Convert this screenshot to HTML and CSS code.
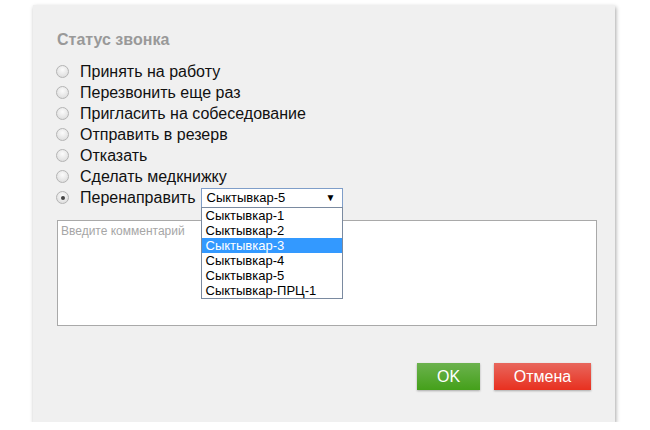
FILE: index.html
```html
<!DOCTYPE html>
<html lang="ru">
<head>
<meta charset="utf-8">
<link rel="stylesheet" href="styles.css">
</head>
<body>
<div class="panel">
  <div class="title">Статус звонка</div>
  <ul class="options">
    <li class="opt"><span class="radio"></span><span>Принять на работу</span></li>
    <li class="opt"><span class="radio"></span><span>Перезвонить еще раз</span></li>
    <li class="opt"><span class="radio"></span><span>Пригласить на собеседование</span></li>
    <li class="opt"><span class="radio"></span><span>Отправить в резерв</span></li>
    <li class="opt"><span class="radio"></span><span>Отказать</span></li>
    <li class="opt"><span class="radio"></span><span>Сделать медкнижку</span></li>
    <li class="opt"><span class="radio checked"></span><span>Перенаправить</span>
      <div class="select">
        <div class="select-box"><span>Сыктывкар-5</span><span class="arrow">▼</span></div>
        <ul class="dropdown">
          <li>Сыктывкар-1</li>
          <li>Сыктывкар-2</li>
          <li class="active">Сыктывкар-3</li>
          <li>Сыктывкар-4</li>
          <li>Сыктывкар-5</li>
          <li>Сыктывкар-ПРЦ-1</li>
        </ul>
      </div>
    </li>
  </ul>
  <div class="comment">Введите комментарий</div>
  <div class="actions">
    <button class="btn ok">OK</button>
    <button class="btn cancel">Отмена</button>
  </div>
</div>
</body>
</html>
```
FILE: styles.css
```css
html, body {
  margin: 0;
  padding: 0;
  background: #fff;
}
body {
  padding: 5px 0 0 33px;
  font-family: "Liberation Sans", Arial, sans-serif;
}
.panel {
  width: 582px;
  height: 417px;
  box-sizing: border-box;
  background: #f0f0f0;
  box-shadow: 1px 2px 4px rgba(0,0,0,0.35);
  padding: 26px 24px 0 24px;
}
.title {
  font-size: 16px;
  font-weight: bold;
  color: #999;
  line-height: 18px;
}
.options {
  list-style: none;
  margin: 12px 0 0 0;
  padding: 0;
}
.opt {
  display: flex;
  align-items: center;
  height: 21px;
  font-size: 16px;
  color: #111;
}
.radio {
  width: 11px;
  height: 11px;
  border-radius: 50%;
  border: 1px solid #b4b4b4;
  background: radial-gradient(circle at 50% 35%, #fbfbfb 0%, #e4e4e4 65%, #d6d6d6 100%);
  margin-left: -1px;
  margin-right: 11px;
  position: relative;
  flex: none;
}
.radio.checked::after {
  content: "";
  position: absolute;
  left: 3.5px;
  top: 3.5px;
  width: 4px;
  height: 4px;
  border-radius: 50%;
  background: #444;
}
.select {
  position: relative;
  margin-left: 5px;
  width: 142px;
  font-size: 13px;
}
.select-box {
  height: 20px;
  box-sizing: border-box;
  border: 1px solid #7f9ec9;
  background: #fff;
  display: flex;
  align-items: center;
  justify-content: space-between;
  padding: 0 6px 0 5px;
  color: #000;
}
.arrow {
  font-size: 10px;
}
.dropdown {
  position: absolute;
  left: 0;
  top: 19px;
  width: 142px;
  box-sizing: border-box;
  margin: 0;
  padding: 0;
  list-style: none;
  background: #fff;
  border: 1px solid #7a8aa0;
  z-index: 2;
}
.dropdown li {
  height: 15px;
  line-height: 15px;
  padding-left: 4px;
  color: #000;
}
.dropdown li.active {
  background: #3399ff;
  color: #fff;
}
.comment {
  margin-top: 12px;
  width: 540px;
  height: 106px;
  box-sizing: border-box;
  background: #fff;
  border: 1px solid #a9a9a9;
  padding: 3px 3px;
  font-size: 12px;
  color: #a6a6a6;
}
.actions {
  display: flex;
  justify-content: flex-end;
  gap: 14px;
  margin-top: 37px;
}
.btn {
  height: 27px;
  border: none;
  color: #fff;
  font-family: "Liberation Sans", Arial, sans-serif;
  font-size: 16px;
  padding: 0;
  box-shadow: 0 1px 2px rgba(0,0,0,0.3);
}
.ok {
  width: 63px;
  background: linear-gradient(#6cb24e, #44a01a);
}
.cancel {
  width: 97px;
  background: linear-gradient(#e8675d, #e8301f);
}
```
